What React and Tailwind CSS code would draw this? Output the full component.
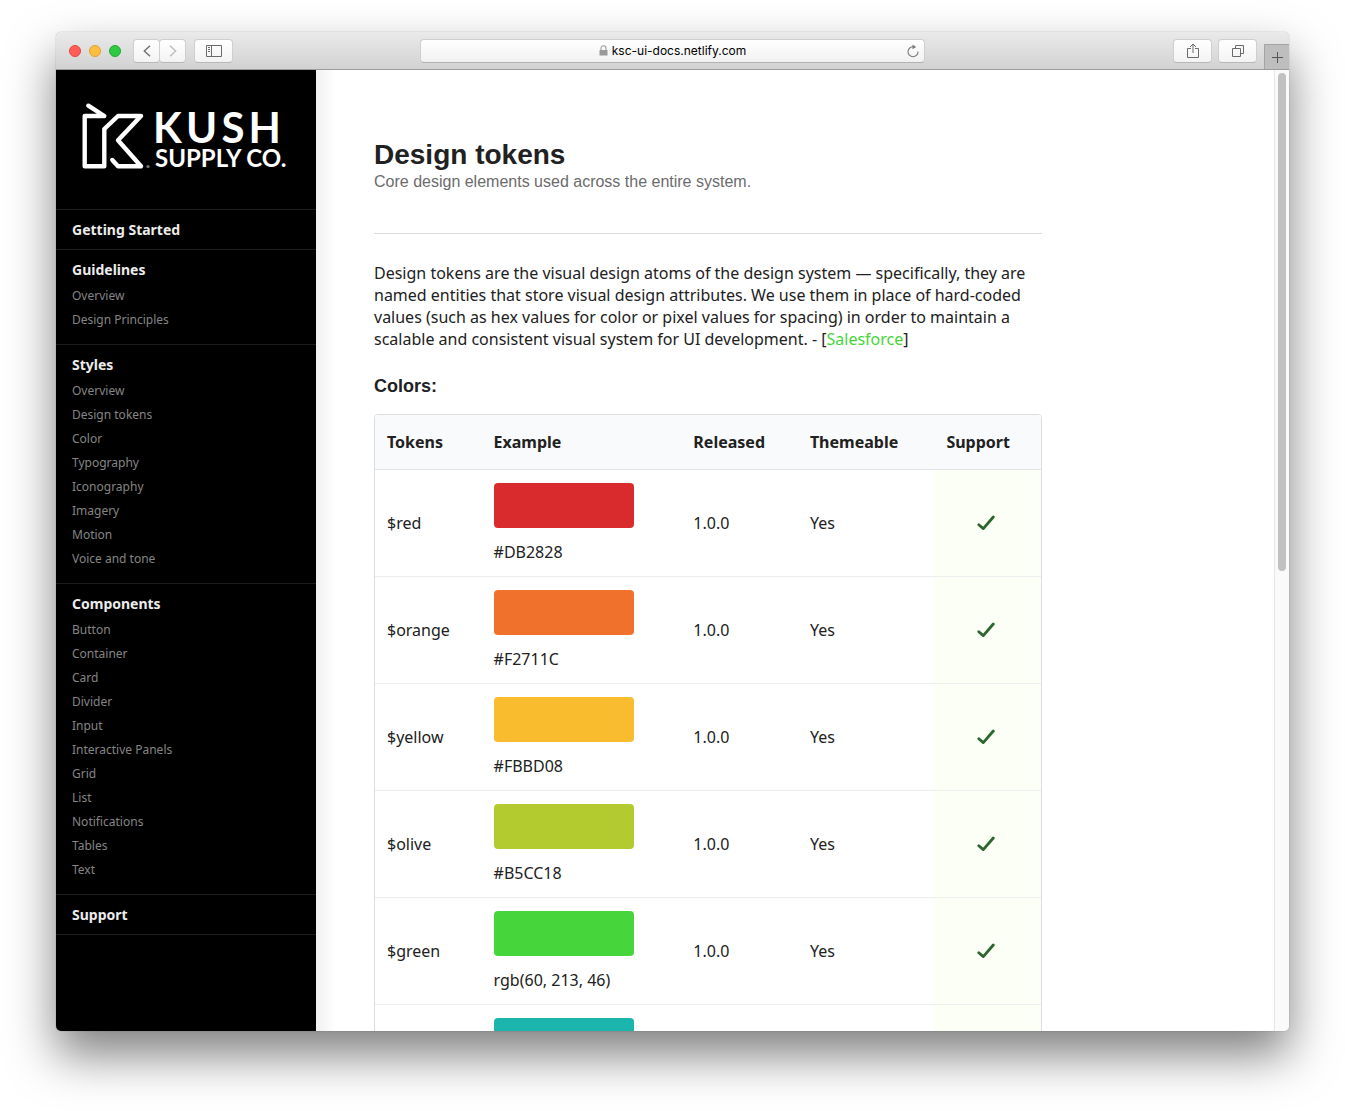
import React from "react";

const sections = [
  { title: "Getting Started", items: [] },
  { title: "Guidelines", items: ["Overview", "Design Principles"] },
  {
    title: "Styles",
    items: ["Overview", "Design tokens", "Color", "Typography", "Iconography", "Imagery", "Motion", "Voice and tone"],
  },
  {
    title: "Components",
    items: ["Button", "Container", "Card", "Divider", "Input", "Interactive Panels", "Grid", "List", "Notifications", "Tables", "Text"],
  },
  { title: "Support", items: [] },
];

const tokens = [
  { name: "$red", value: "#DB2828", swatch: "bg-[#d92a2e]" },
  { name: "$orange", value: "#F2711C", swatch: "bg-[#f0712c]" },
  { name: "$yellow", value: "#FBBD08", swatch: "bg-[#f9bc2f]" },
  { name: "$olive", value: "#B5CC18", swatch: "bg-[#b4cb30]" },
  { name: "$green", value: "rgb(60, 213, 46)", swatch: "bg-[#46d53b]" },
  { name: "$teal", value: "#00B5AD", swatch: "bg-[#1bb5ad]" },
];

function ToolButton({ label, className, children }) {
  return (
    <button
      type="button"
      aria-label={label}
      className={
        "flex h-6 items-center justify-center rounded border border-[#d0ced0] border-b-[#b9b7b9] bg-linear-to-b from-white to-[#f3f3f3] " +
        className
      }
    >
      {children}
    </button>
  );
}

function TitleBar() {
  return (
    <header className="grid h-[38px] shrink-0 grid-cols-[1fr_41%_1fr] items-center border-b border-[#9b9b9b] bg-linear-to-b from-[#ebeaeb] to-[#d3d2d3]">
      <div className="flex items-center pl-[13px]">
        <div className="flex gap-2">
          <button type="button" aria-label="Close" className="size-3 rounded-full border border-[#e2463f] bg-[#ff5f57]" />
          <button type="button" aria-label="Minimize" className="size-3 rounded-full border border-[#e0a033] bg-[#ffbd3f]" />
          <button type="button" aria-label="Zoom" className="size-3 rounded-full border border-[#1faa33] bg-[#2fc943]" />
        </div>
        <ToolButton label="Back" className="ml-3 w-[27px]">
          <svg width="8" height="12" viewBox="0 0 8 12" fill="none" stroke="#6f6f6f" strokeWidth="1.4">
            <path d="M7 .7 1.3 6 7 11.3" />
          </svg>
        </ToolButton>
        <ToolButton label="Forward" className="-ml-px w-[27px]">
          <svg width="8" height="12" viewBox="0 0 8 12" fill="none" stroke="#bdbdbd" strokeWidth="1.4">
            <path d="M1 .7 6.7 6 1 11.3" />
          </svg>
        </ToolButton>
        <ToolButton label="Show sidebar" className="ml-2 w-[39px]">
          <svg width="16" height="12" viewBox="0 0 16 12" fill="none" stroke="#6a6a6a">
            <path d="M.5.5h15v11H.5zM5.5.5v11M2 2.5h2M2 4.5h2M2 6.5h2" />
          </svg>
        </ToolButton>
      </div>

      <div className="flex h-6 items-center rounded border border-[#d0ced0] border-b-[#b3b1b3] bg-linear-to-b from-white to-[#f1f1f1] px-[5px]">
        <div className="flex flex-1 items-center justify-center gap-1 pl-3">
          <svg width="9" height="11" viewBox="0 0 9 11" fill="#9a9a9a">
            <path d="M.5 5h8v5.5h-8z" />
            <path d="M2 5.2V3.3a2.500 2.500 0 0 1 5 0v1.900" fill="none" stroke="#9a9a9a" strokeWidth="1.1" />
          </svg>
          <span className="font-['Inter','Liberation_Sans',sans-serif] text-xs text-black">ksc-ui-docs.netlify.com</span>
        </div>
        <button type="button" aria-label="Reload">
          <svg width="12" height="14" viewBox="0 0 12 14" fill="none" stroke="#7a7a7a" strokeWidth="1.1">
            <path d="M6.500 2.800a5 5 0 1 0 4.500 4.700" />
            <path d="M5.500.5 9.200 2.900 5.500 5.300z" fill="#7a7a7a" stroke="none" />
          </svg>
        </button>
      </div>

      <div className="flex items-center justify-end self-stretch">
        <ToolButton label="Share" className="w-[39px]">
          <svg width="12" height="16" viewBox="0 0 12 16" fill="none" stroke="#6a6a6a">
            <path d="M4 5.500H.5v9h11v-9H8M6 10V1M3 4l3-3 3 3" />
          </svg>
        </ToolButton>
        <ToolButton label="Show tabs" className="ml-1.5 w-[39px]">
          <svg width="12" height="12" viewBox="0 0 12 12" fill="none" stroke="#6a6a6a">
            <path d="M.5 3.500h8v8h-8zM3.500 3.500v-3h8v8h-3" />
          </svg>
        </ToolButton>
        <button
          type="button"
          aria-label="New tab"
          className="ml-[7px] flex h-[25px] w-[25px] items-center justify-center self-end border-t border-l border-[#a5a4a5] bg-[#bfbebf]"
        >
          <svg width="11" height="11" viewBox="0 0 11 11" fill="none" stroke="#555">
            <path d="M5.500 0v11M0 5.500h11" />
          </svg>
        </button>
      </div>
    </header>
  );
}

function Logo() {
  return (
    <svg width="212" height="72" viewBox="80 100 212 72" role="img" aria-label="Kush Supply Co.">
      <path
        d="M88.300 105.700 104.300 116H84.700v50.300h19.600V129L118 116h23l-23 24.300 23 26H118l-5.700-6.300"
        fill="none"
        stroke="#fff"
        strokeWidth="4.400"
        strokeLinecap="round"
        strokeLinejoin="round"
      />
      <circle cx="148" cy="166.500" r="1.600" fill="#777" />
      <text x="153" y="143" fill="#fff" className="font-['Lato',sans-serif] text-[42px] font-bold tracking-widest">
        KUSH
      </text>
      <text x="155" y="167" fill="#fff" className="font-['Lato',sans-serif] text-[24px] font-bold">
        SUPPLY CO.
      </text>
    </svg>
  );
}

function Sidebar() {
  return (
    <nav className="w-[260px] shrink-0 overflow-hidden bg-black">
      <a href="#home" className="block border-b border-[#1c1c1c] px-6 pt-[30px] pb-[37px]">
        <Logo />
      </a>
      {sections.map((section) => (
        <section key={section.title} className="border-b border-[#1c1c1c] px-4 pt-2.5 pb-[9px]">
          <h2 className="text-sm leading-5 font-bold text-[#ececec]">
            <a href="#section">{section.title}</a>
          </h2>
          {section.items.length > 0 && (
            <ul className="pt-1 pb-[3px]">
              {section.items.map((item) => (
                <li key={item} className="text-xs leading-6 text-[#858585]">
                  <a href="#page">{item}</a>
                </li>
              ))}
            </ul>
          )}
        </section>
      ))}
    </nav>
  );
}

function TokenTable() {
  return (
    <div className="mt-4 overflow-hidden rounded border border-[#dcdddd]">
      <table className="w-full table-fixed text-left text-base leading-6">
        <thead>
          <tr className="h-[54px] border-b border-[#e2e3e4] bg-[#f9fafb] font-bold">
            <th className="w-[16%] px-3">Tokens</th>
            <th className="w-[30%] px-3">Example</th>
            <th className="w-[17.5%] px-3">Released</th>
            <th className="w-[20.5%] px-3">Themeable</th>
            <th className="w-[16%] px-3">Support</th>
          </tr>
        </thead>
        <tbody>
          {tokens.map((token) => (
            <tr key={token.name} className="border-b border-[#ededed]">
              <td className="px-3">{token.name}</td>
              <td className="px-3 pt-[13px] pb-3">
                <div className={"mb-3 h-[45px] w-[140px] rounded " + token.swatch} />
                {token.value}
              </td>
              <td className="px-3">1.0.0</td>
              <td className="px-3">Yes</td>
              <td className="bg-[#fcfff5] pr-4 pl-3">
                <svg width="18" height="16" viewBox="0 0 18 16" role="img" aria-label="Supported" className="mx-auto" fill="none" stroke="#2c662d" strokeWidth="2.800" strokeLinecap="round" strokeLinejoin="round">
                  <path d="M1.800 9.700 6.300 13.600 16.300 2" />
                </svg>
              </td>
            </tr>
          ))}
        </tbody>
      </table>
    </div>
  );
}

export default function App() {
  return (
    <div className="flex h-screen flex-col bg-white px-14 pt-8 pb-20 font-['Noto_Sans',sans-serif] text-[#212121]">
      <div className="flex min-h-0 flex-1 flex-col overflow-hidden rounded-[5px] bg-white shadow-[0_0_1px_rgba(0,0,0,0.5),0_24px_48px_rgba(0,0,0,0.5)]">
        <TitleBar />
        <div className="flex min-h-0 flex-1">
          <Sidebar />
          <div className="w-5 shrink-0 bg-linear-to-r from-[#f1f1f1] to-white" />
          <main className="min-w-0 flex-1 overflow-hidden pr-10 pl-[38px]">
            <div className="max-w-[668px]">
              <header className="border-b border-[#dcdddd] pt-[69px] pb-10">
                <h1 className="font-['Liberation_Sans',sans-serif] text-[28px] leading-8 font-bold">Design tokens</h1>
                <p className="font-['Liberation_Sans',sans-serif] text-base leading-[22px] text-[#6b6b6b]">
                  Core design elements used across the entire system.
                </p>
              </header>
              <p className="mt-7 text-base leading-[22px]">
                Design tokens are the visual design atoms of the design system — specifically, they are named entities that
                store visual design attributes. We use them in place of hard-coded values (such as hex values for color or
                pixel values for spacing) in order to maintain a scalable and consistent visual system for UI development. -
                [<a href="#salesforce" className="text-[#46d53b]">Salesforce</a>]
              </p>
              <h2 className="mt-6 font-['Liberation_Sans',sans-serif] text-lg leading-6 font-bold">Colors:</h2>
              <TokenTable />
            </div>
          </main>
          <div className="flex w-[15px] shrink-0 justify-center border-l border-[#e6e6e6] bg-[#fafafa] pt-[3px]">
            <div className="h-[52%] w-2 rounded-full bg-[#c1c1c1]" />
          </div>
        </div>
      </div>
    </div>
  );
}
